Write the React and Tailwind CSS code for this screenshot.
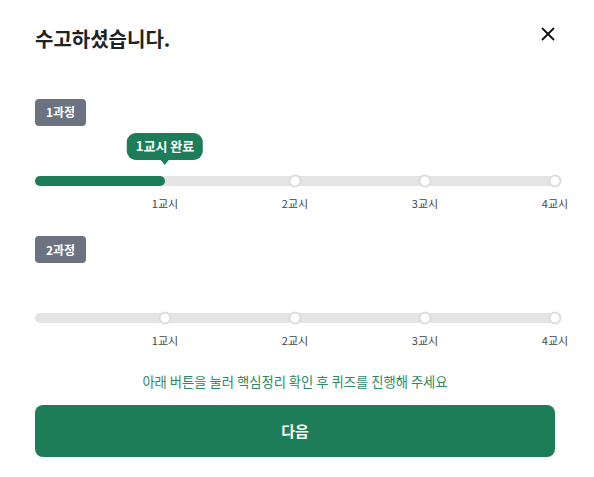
import React from 'react';

const FONT = { fontFamily: '"Noto Sans CJK KR", "Noto Sans", sans-serif' };

const Track = ({ done, tooltip }) => {
    const steps = [1, 2, 3, 4];
    return (
        <div>
            <div className="relative h-[50px]">
                {tooltip && (
                    <div className="absolute left-1/4 top-[7px] -translate-x-1/2 flex flex-col items-center">
                        <div className="h-[27px] px-[9px] flex items-center rounded-[9px] bg-[#1d7d58] text-white text-[13px] font-bold whitespace-nowrap">
                            {tooltip}
                        </div>
                        <div className="w-0 h-0 border-l-[4px] border-r-[4px] border-t-[5px] border-l-transparent border-r-transparent border-t-[#1d7d58]" />
                    </div>
                )}
            </div>
            <div className="relative h-[10px] rounded-full bg-[#e4e4e4]">
                {done > 0 && (
                    <div
                        className="absolute left-0 top-0 h-full rounded-full bg-[#1d7d58]"
                        style={{ width: `${done * 25}%` }}
                    />
                )}
                {steps.filter((s) => s > done).map((s) => (
                    <div
                        key={s}
                        className="absolute top-1/2 -translate-x-1/2 -translate-y-1/2 w-[13px] h-[13px] rounded-full bg-white border-[2.5px] border-[#dcdcdc]"
                        style={{ left: `${s * 25}%` }}
                    />
                ))}
            </div>
            <div className="grid grid-cols-4 mt-[9px]">
                {steps.map((s) => (
                    <div key={s} className="flex justify-end">
                        <span className="translate-x-1/2 text-[11px] leading-[16px] text-[#444]">{s}교시</span>
                    </div>
                ))}
            </div>
        </div>
    );
};

const Badge = ({ children }) => (
    <div className="inline-flex h-[27px] px-[11px] items-center rounded-[4px] bg-[#6b7280] text-white text-[12px] font-bold">
        {children}
    </div>
);

export default function App() {
    return (
        <div className="w-[594px] h-[477px] bg-white pl-[35px] pr-[39px] pt-[25px]" style={FONT}>
            <div className="flex items-center justify-between">
                <h1 className="text-[20px] leading-[28px] font-bold text-[#222]">수고하셨습니다.</h1>
                <svg width="14" height="14" viewBox="0 0 14 14" className="-mt-[10px]">
                    <path d="M1.5 1.5 L12.5 12.5 M12.5 1.5 L1.5 12.5" stroke="#111" strokeWidth="1.8" strokeLinecap="round" />
                </svg>
            </div>

            <div className="mt-[45px]">
                <Badge>1과정</Badge>
                <Track done={1} tooltip="1교시 완료" />
            </div>

            <div className="mt-[25px]">
                <Badge>2과정</Badge>
                <Track done={0} />
            </div>

            <p className="mt-[25px] text-center text-[13.3px] leading-[18px] text-[#2a8a63]">
                아래 버튼을 눌러 핵심정리 확인 후 퀴즈를 진행해 주세요
            </p>

            <button className="mt-[14px] w-full h-[52px] rounded-[8px] bg-[#1d7d58] text-white text-[15px] font-bold">
                다음
            </button>
        </div>
    );
}
